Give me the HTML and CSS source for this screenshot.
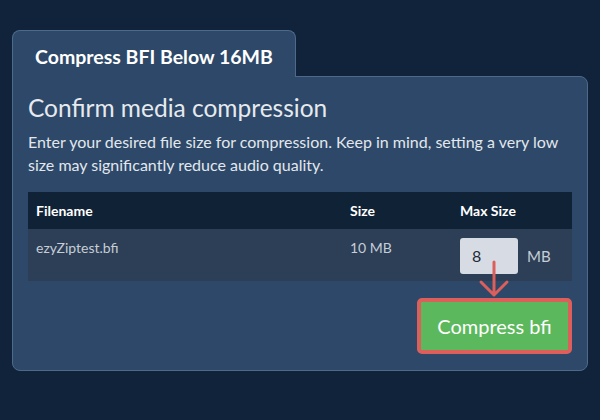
FILE: index.html
```html
<!DOCTYPE html>
<html>
<head>
<meta charset="utf-8">
<link rel="stylesheet" href="styles.css">
</head>
<body>
<div class="wrap">
  <div class="tab">Compress BFI Below 16MB</div>
  <div class="panel">
    <h1 class="heading">Confirm media compression</h1>
    <p class="desc">Enter your desired file size for compression. Keep in mind, setting a very low size may significantly reduce audio quality.</p>
    <table class="files">
      <thead>
        <tr><th class="c-name">Filename</th><th class="c-size">Size</th><th class="c-max">Max Size</th></tr>
      </thead>
      <tbody>
        <tr>
          <td class="c-name">ezyZiptest.bfi</td>
          <td class="c-size">10 MB</td>
          <td class="c-max"><div class="maxcell"><div class="num">8</div><span class="unit">MB</span></div></td>
        </tr>
      </tbody>
    </table>
    <div class="actions"><button class="btn">Compress bfi</button></div>
    <svg class="arrow" width="32" height="40" viewBox="0 0 32 40"><path d="M16 2 V35 M3 22 L16 35 L29 22" fill="none" stroke="#dc5f5b" stroke-width="3" stroke-linecap="round" stroke-linejoin="round"/></svg>
  </div>
</div>
</body>
</html>
```
FILE: styles.css
```css
html, body { margin: 0; padding: 0; }
body {
  background: #10233a;
  font-family: Lato, "Noto Sans", sans-serif;
  width: 600px;
  height: 420px;
  overflow: hidden;
}
.wrap { padding: 30px 0 0 12px; }
.tab {
  position: relative;
  z-index: 1;
  box-sizing: border-box;
  width: 284px;
  height: 47px;
  margin-bottom: -1px;
  background: #2d4868;
  border: 1px solid #4e6a8b;
  border-bottom: none;
  border-radius: 8px 8px 0 0;
  color: #ffffff;
  font-weight: 700;
  font-size: 19.5px;
  line-height: 22px;
  padding: 15px 0 0 22px;
}
.panel {
  position: relative;
  box-sizing: border-box;
  width: 576px;
  height: 295px;
  background: #2d4868;
  border: 1px solid #4e6a8b;
  border-radius: 0 8px 8px 8px;
  padding: 16px 15px 0 15px;
}
.heading {
  margin: 0;
  font-weight: 400;
  font-size: 24.5px;
  line-height: 30px;
  color: #e6eaef;
}
.desc {
  margin: 7px 0 0 0;
  font-size: 16px;
  line-height: 23px;
  color: #e2e7ed;
}
.files {
  width: 100%;
  border-collapse: collapse;
  margin-top: 16px;
  font-size: 14px;
}
.files th {
  background: #0f2236;
  color: #ffffff;
  font-weight: 700;
  text-align: left;
  height: 37px;
  padding: 0 8px;
  box-sizing: border-box;
}
.files td {
  background: #2c3f56;
  color: #c6cdd6;
  vertical-align: top;
  padding: 9px 8px 7px 8px;
  line-height: 20px;
}
.c-name { width: 298px; }
.c-size { width: 94px; }
.maxcell { display: flex; align-items: center; gap: 9px; }
.num {
  box-sizing: border-box;
  width: 58px;
  height: 36px;
  background: #d7dce4;
  border-radius: 3px;
  color: #1f2a38;
  font-size: 16px;
  line-height: 36px;
  padding-left: 12px;
}
.unit { font-size: 15px; color: #c6cdd6; }
.actions { display: flex; justify-content: flex-end; margin-top: 17px; }
.btn {
  box-sizing: border-box;
  width: 155px;
  height: 56px;
  background: #5cb85c;
  border: 4px solid #dc5f5b;
  border-radius: 5px;
  color: #ffffff;
  font-family: Lato, "Noto Sans", sans-serif;
  font-weight: 400;
  font-size: 20px;
  padding: 0;
}
.arrow { position: absolute; left: 465px; top: 183px; }
```
